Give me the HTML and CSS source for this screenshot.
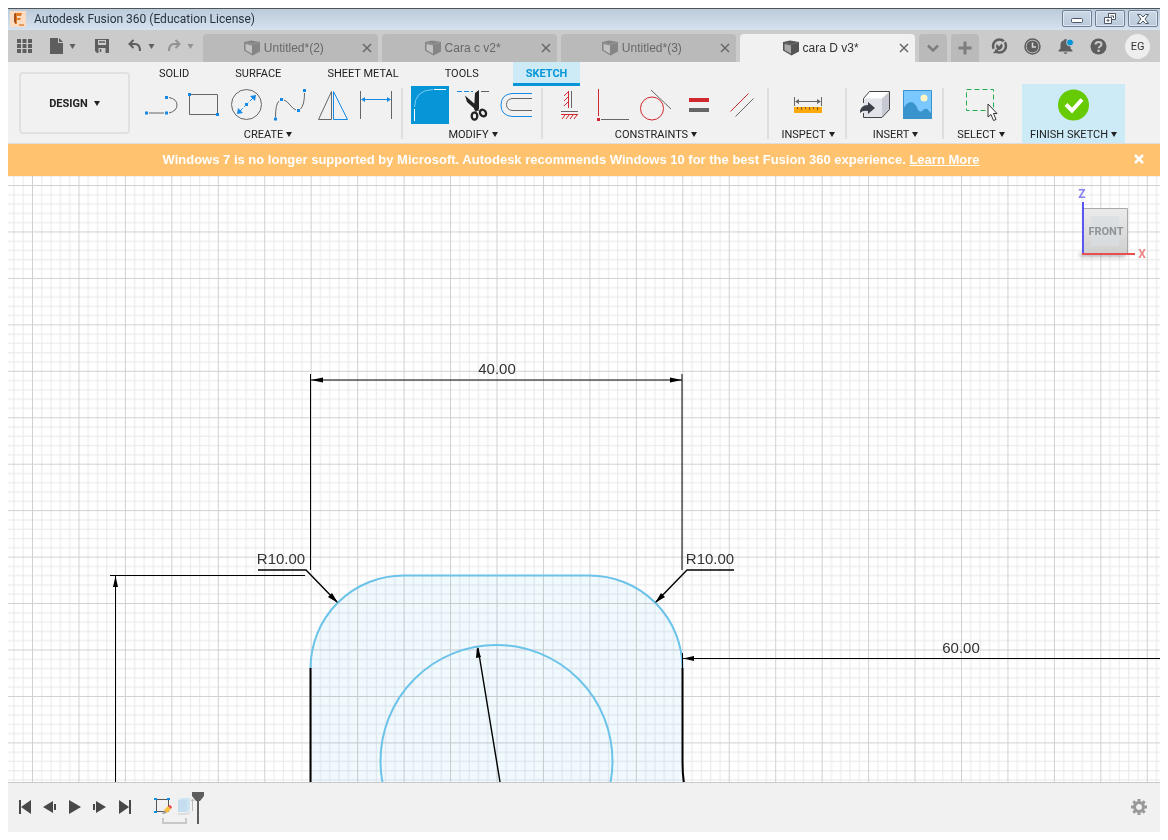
FILE: index.html
```html
<!DOCTYPE html>
<html lang="en">
<head>
<meta charset="utf-8">
<title>Autodesk Fusion 360 (Education License)</title>
<link rel="stylesheet" href="styles.css">
</head>
<body>
<svg class="defs" aria-hidden="true">
  <symbol id="cube" viewBox="0 0 16 16">
    <path d="M0 2 7 .5 16 2v9.500L8.500 15.500 0 10.500z" fill="currentColor"/>
    <path d="M1.500 4 8 5.500v8.300L1.500 10z" fill="#fff" fill-opacity=".5"/>
    <path d="M1.500 2.500 8 4.500 15 2.500" fill="none" stroke="#fff" stroke-opacity=".15"/>
  </symbol>
  <symbol id="close" viewBox="0 0 10 10"><path d="m1 1 8 8M9 1 1 9" stroke="currentColor" stroke-width="1.500" fill="none"/></symbol>
  <symbol id="caret" viewBox="0 0 6 5"><path d="M0 0h6L3 5z" fill="currentColor"/></symbol>
</svg>
<div class="app">
  <header class="titlebar">
    <svg class="logo" width="16" height="16" viewBox="0 0 16 16"><rect width="16" height="16" fill="#fbdcc0"/><path d="M5 2h7l-1 3H7v2h4l-1 2H7v4H5z" fill="#e07b28"/><path d="M5 2 4 3v8l2 2V2z" fill="#a8501a"/><path d="M9 14h5" stroke="#e59a60" stroke-width="2"/></svg>
    <h1 class="title">Autodesk Fusion 360 (Education License)</h1>
    <div class="window-buttons">
      <button class="win" aria-label="Minimize"><svg width="12" height="12" viewBox="0 0 12 12"><rect x=".5" y="5.500" width="11" height="4" rx="1" fill="#fff" stroke="#4c5666"/></svg></button>
      <button class="win" aria-label="Restore"><svg width="12" height="12" viewBox="0 0 12 12" fill="#fff" stroke="#4c5666"><path d="M4.500.5h7v6h-7z"/><path d="M6.500 3h3v2" /><path d="M.5 4.500h7v6h-7z"/><path d="M3 7h2v1H3z"/></svg></button>
      <button class="win" aria-label="Close"><svg width="12" height="12" viewBox="0 0 12 12"><path d="M.5 1.500h3L6 4l2.500-2.500h3L8 6l3.500 4.500h-3L6 8l-2.500 2.500h-3L4 6z" fill="#fff" stroke="#4c5666"/></svg></button>
    </div>
  </header>

  <div class="appbar">
    <div class="quick">
      <button aria-label="Data panel"><svg width="15" height="15" viewBox="0 0 15 15" fill="#5e5e5e"><path d="M0 0h4v4H0zM5.500 0h4v4h-4zM11 0h4v4h-4zM0 5h4v4H0zM5.500 5h4v4h-4zM11 5h4v4h-4zM0 10h4v4H0zM5.500 10h4v4h-4zM11 10h4v4h-4z"/></svg></button>
      <button class="file" aria-label="File"><svg width="14" height="16" viewBox="0 0 14 16" fill="#5e5e5e"><path d="M0 0h8v5h5v11H0z"/><path d="M9 0l4 4H9z"/></svg><svg class="drop" width="7" height="5"><use href="#caret"/></svg></button>
      <button class="save" aria-label="Save"><svg width="14" height="14" viewBox="0 0 14 14"><path d="M0 0h14v14H2l-2-2z" fill="#5e5e5e"/><path d="M3 1h8v5H3zM3.500 9h7v5h-7z" fill="#cbcbcb"/><path d="M4 3h6M5.500 10v3" stroke="#5e5e5e" stroke-width="1.500"/></svg></button>
      <button class="undo" aria-label="Undo"><svg width="14" height="14" viewBox="0 0 14 14" fill="none" stroke="#5e5e5e" stroke-width="2"><path d="M5.500 1 1.500 5l4 4M2 5h5q5 0 5 7"/></svg><svg class="drop" width="7" height="5"><use href="#caret"/></svg></button>
      <button class="redo" aria-label="Redo"><svg width="14" height="14" viewBox="0 0 14 14" fill="none" stroke="currentColor" stroke-width="2"><path d="m8.500 1 4 4-4 4M12 5H7q-5 0-5 7"/></svg><svg class="drop" width="7" height="5"><use href="#caret"/></svg></button>
    </div>
    <nav class="docs">
      <div class="doc"><svg width="16" height="16"><use href="#cube"/></svg><span>Untitled*(2)</span><button aria-label="Close Untitled*(2)"><svg width="10" height="10"><use href="#close"/></svg></button></div>
      <div class="doc"><svg width="16" height="16"><use href="#cube"/></svg><span>Cara c v2*</span><button aria-label="Close Cara c v2*"><svg width="10" height="10"><use href="#close"/></svg></button></div>
      <div class="doc"><svg width="16" height="16"><use href="#cube"/></svg><span>Untitled*(3)</span><button aria-label="Close Untitled*(3)"><svg width="10" height="10"><use href="#close"/></svg></button></div>
      <div class="doc current"><svg width="16" height="16"><use href="#cube"/></svg><span>cara D v3*</span><button aria-label="Close cara D v3*"><svg width="10" height="10"><use href="#close"/></svg></button></div>
      <button class="mini" aria-label="More tabs"><svg width="12" height="8" viewBox="0 0 12 8"><path d="m1 1.500 5 5 5-5" fill="none" stroke="#7e7e7e" stroke-width="2.500"/></svg></button>
      <button class="mini" aria-label="New design"><svg width="14" height="14" viewBox="0 0 14 14"><path d="M7 .5v13M.5 7h13" stroke="#7e7e7e" stroke-width="3"/></svg></button>
    </nav>
    <div class="status">
      <button aria-label="Extensions"><svg width="17" height="17" viewBox="0 0 17 17"><circle cx="8.500" cy="8" r="6.500" fill="none" stroke="#5e5e5e" stroke-width="2.500"/><path d="M10 7l5-5" stroke="#cbcbcb" stroke-width="1.500"/><path d="M0 12l4-2v6H1z" fill="#cbcbcb"/><path d="M2 15l4-4q-2-3 0-5l2 2.500 2.500-3q2 2 .5 4.500t-3.500 2L4 15.500z" fill="#5e5e5e"/></svg></button>
      <button aria-label="Job status"><svg width="17" height="17" viewBox="0 0 17 17"><circle cx="8.500" cy="8.500" r="7.500" fill="none" stroke="#5e5e5e" stroke-width="1.500"/><circle cx="8.500" cy="8.500" r="6" fill="#5e5e5e"/><path d="M8.500 4.500v4.500H12" fill="none" stroke="#d8d8d8" stroke-width="1.500"/></svg></button>
      <button aria-label="Notifications"><svg width="17" height="17" viewBox="0 0 17 17"><path d="M1.500 13.500v-1l2-2V7q0-4 4-5V1h2v1q4 1 4 5v3.500l2 2v1z" fill="#5e5e5e"/><path d="M6.500 14.500h4q-2 3-4 0z" fill="#5e5e5e"/><circle cx="13" cy="4.500" r="3.500" fill="#0696d7" stroke="#cbcbcb"/></svg></button>
      <button aria-label="Help"><svg width="17" height="17" viewBox="0 0 17 17"><circle cx="8.500" cy="8.500" r="8" fill="#5e5e5e"/><path d="M5.500 6.500q0-2.500 3-2.500t3 2.300q0 1.200-1.500 2.200-1.300.8-1.300 1.700" fill="none" stroke="#cbcbcb" stroke-width="2"/><circle cx="8.600" cy="12.800" r="1.300" fill="#cbcbcb"/></svg></button>
      <button class="avatar">EG</button>
    </div>
  </div>

  <div class="ribbon">
    <button class="workspace">DESIGN <svg width="6" height="5"><use href="#caret"/></svg></button>
    <div class="ribbon-main">
      <nav class="ribbon-tabs">
        <button>SOLID</button><button>SURFACE</button><button>SHEET METAL</button><button>TOOLS</button><button class="selected">SKETCH</button>
      </nav>
      <div class="groups">
        <section class="group create">
          <div class="tools">
            <button aria-label="Line"><svg class="tool" viewBox="0 0 38 38"><path d="M7 27h15M27 11.500q8 1.500 8 7.500t-8 8" class="g"/><path d="M3 25.500h3v3H3zM23 25.500h3v3h-3zM23 10h3v3h-3z" class="b"/></svg></button>
            <button aria-label="Rectangle"><svg class="tool" viewBox="0 0 38 38"><path d="M4.500 8.500h28v20h-28z" class="g"/><path d="M3 7h3v3H3zM31 27h3v3h-3z" class="b"/></svg></button>
            <button aria-label="Circle"><svg class="tool" viewBox="0 0 38 38"><circle cx="18.500" cy="18.500" r="15" class="g"/><path d="m10.500 26.500 16-16" class="bl" stroke-dasharray="6 2"/><path d="M17 17h3v3h-3zM9 28l1-6 5 5zM28 9l-1 6-5-5z" class="b"/></svg></button>
            <button aria-label="Spline"><svg class="tool" viewBox="0 0 38 38"><path d="M4.500 31Q4.500 18 8 15M13 14q3 1 6 5t6 5M29.500 23q4-4 4-16" class="g"/><path d="M3 31.500h3v3H3zM9 12h3v3H9zM26 23h3v3h-3zM32 3h3v3h-3z" class="b"/></svg></button>
            <button aria-label="Mirror"><svg class="tool" viewBox="0 0 38 38"><path d="M17.500 5.500v28h-13z" class="g"/><path d="M19.500 5.500v28h14z" class="bl"/></svg></button>
            <button aria-label="Sketch dimension"><svg class="tool" viewBox="0 0 38 38"><path d="M3.500 5v28M34.500 5v28" class="g"/><path d="M7 13.500h24" class="bl"/><path d="M4 13.500l4-2.500v5zM34 13.500l-4-2.500v5z" class="b"/></svg></button>
          </div>
          <button class="label">CREATE <svg width="6" height="5"><use href="#caret"/></svg></button>
        </section>
        <section class="group modify">
          <div class="tools">
            <button aria-label="Fillet" class="active"><svg class="tool" viewBox="0 0 38 38"><path d="M3.500 21Q4 4 22 3.500" fill="none" stroke="#7cc8f2"/><path d="M3.500 23v12M23 3.500h12" stroke="#fff"/></svg></button>
            <button aria-label="Trim"><svg class="tool" viewBox="0 0 38 38"><path d="M3 5.500h16" class="bl" stroke-dasharray="5 2"/><path d="M27 5.500h8" class="g"/><path d="M11 9.500 23 20l2 5-3-1-9-8zM21 7l4-3v19l-3 3-2-3z" fill="#222"/><g fill="none" stroke="#222" stroke-width="2.300"><ellipse cx="20.500" cy="30" rx="2.800" ry="3.700"/><ellipse cx="29" cy="27" rx="2.800" ry="3.500" transform="rotate(-38 29 27)"/></g></svg></button>
            <button aria-label="Offset"><svg class="tool" viewBox="0 0 38 38"><path d="M35 7.500H15q-11 1-11 11.500t11 11.500h20" class="bl"/><path d="M35 12.500H15q-5.500 1-5.500 6t5.500 6h20" class="g"/></svg></button>
          </div>
          <button class="label">MODIFY <svg width="6" height="5"><use href="#caret"/></svg></button>
        </section>
        <section class="group constraints">
          <div class="tools">
            <button aria-label="Horizontal/Vertical"><svg class="tool" viewBox="0 0 38 38"><path d="M20.500 5v17M10 25.500h17" class="g"/><path d="M17.500 5v17M10 28.500h17M17 6l-4 4M17 11l-4 4M17 16l-4 4M14 29l-3 4M18 29l-3 4M22 29l-3 4M26 29l-3 4" class="r"/></svg></button>
            <button aria-label="Perpendicular"><svg class="tool" viewBox="0 0 38 38"><path d="M4.500 3v27" class="r"/><path d="M3 32h3v3H3z" fill="#d0282e"/><path d="M7 33.500h28" class="g"/></svg></button>
            <button aria-label="Tangent"><svg class="tool" viewBox="0 0 38 38"><circle cx="15" cy="22.500" r="11.500" class="r"/><path d="M14 4l20 19" class="g"/></svg></button>
            <button aria-label="Equal"><svg class="tool" viewBox="0 0 38 38"><path d="M9 12h20v4H9z" fill="#d0282e"/><path d="M9 22h20v4H9z" fill="#666"/></svg></button>
            <button aria-label="Parallel"><svg class="tool" viewBox="0 0 38 38"><path d="m7.500 25.500 18-18" class="r"/><path d="m12.500 30.500 18-18" class="g"/></svg></button>
          </div>
          <button class="label">CONSTRAINTS <svg width="6" height="5"><use href="#caret"/></svg></button>
        </section>
        <section class="group inspect">
          <div class="tools">
            <button aria-label="Measure"><svg class="tool" viewBox="0 0 38 38"><path d="M5.500 11v9M32.500 11v9M7 15.500h24" class="g"/><path d="m6 15.500 4-2.500v5zM32 15.500l-4-2.500v5z" fill="#666"/><path d="M5 21h28v6H5z" fill="#fba90a"/><path d="M8.500 21v2M12.500 21v3M16.500 21v2M20.500 21v3M24.500 21v2M28.500 21v3" stroke="#80601c"/></svg></button>
          </div>
          <button class="label">INSPECT <svg width="6" height="5"><use href="#caret"/></svg></button>
        </section>
        <section class="group insert">
          <div class="tools">
            <button aria-label="Insert derive"><svg class="tool" viewBox="0 0 38 38"><path d="M8.500 12.500 14 5.500h20.500L27 12.500z" fill="#fff"/><path d="M27 12.500 34.500 5.500v18l-7.500 8z" fill="#c6c9d1"/><path d="M8.500 12.500H27v19H8.500z" fill="#e3e4ea"/><path d="M8.500 17v-4.500l6-7h20v18l-7.500 8H8.500V27" fill="none" stroke="#444"/><path d="M5 27q0-8 8-8v-3l7 6-7 6v-3q-5-1-8 2z" fill="#3c4048"/></svg></button>
            <button aria-label="Insert image"><svg class="tool" viewBox="0 0 38 38"><path d="M5 4h29v29H5z" fill="#7bc8ff"/><circle cx="26" cy="12" r="3.500" fill="#fff5c4"/><path d="M5 23q4-7 8-7t7 8q3 3 5 0 4-3 6 1l3 3v5H5z" fill="#3993cc"/><path d="M5.500 4.500h28v28h-28z" fill="none" stroke="#3993cc"/></svg></button>
          </div>
          <button class="label">INSERT <svg width="6" height="5"><use href="#caret"/></svg></button>
        </section>
        <section class="group select">
          <div class="tools">
            <button aria-label="Select"><svg class="tool" viewBox="0 0 38 38"><path d="M4.500 3.500h27v21h-27z" fill="none" stroke="#22ae4c" stroke-dasharray="5 3"/><path d="M26 18v13l3-2.500 2.500 6 2.500-1-2.500-6H35z" fill="#fff" stroke="#333"/></svg></button>
          </div>
          <button class="label">SELECT <svg width="6" height="5"><use href="#caret"/></svg></button>
        </section>
        <section class="group finish">
          <div class="tools">
            <button aria-label="Finish sketch"><svg class="tool" viewBox="0 0 38 38"><circle cx="18.500" cy="19" r="15.500" fill="#66cb05"/><path d="m11 18.500 6 6 10-11" fill="none" stroke="#fff" stroke-width="4"/></svg></button>
          </div>
          <button class="label">FINISH SKETCH <svg width="6" height="5"><use href="#caret"/></svg></button>
        </section>
      </div>
    </div>
  </div>

  <div class="banner" role="alert">
    <p>Windows 7 is no longer supported by Microsoft. Autodesk recommends Windows 10 for the best Fusion 360 experience. <a href="#">Learn More</a></p>
    <button aria-label="Dismiss"><svg width="10" height="10" viewBox="0 0 10 10"><path d="m1 1 8 8M9 1 1 9" stroke="#fff" stroke-width="2.500"/></svg></button>
  </div>

  <main class="canvas">
    <svg class="sketch" width="100%" height="100%">
      <defs>
        <pattern id="grid" x="24" y="9" width="46.450" height="46.450" patternUnits="userSpaceOnUse">
          <path d="M9.790 0v46.450M19.080 0v46.450M28.370 0v46.450M37.660 0v46.450M0 9.790h46.450M0 19.080h46.450M0 28.370h46.450M0 37.660h46.450" stroke="#e8e8e8"/>
          <path d="M.5 0v46.450M0 .5h46.450" stroke="#d0d0d0"/>
        </pattern>
      </defs>
      <g transform="translate(-8 -176)">
        <path d="M310.500 790V668A93 93 0 0 1 403.500 575.500H589.500A93 93 0 0 1 682.500 668V790z" fill="#f0f9fe"/>
      </g>
      <rect class="grid" width="100%" height="100%" fill="url(#grid)"/>
      <g transform="translate(-8 -176)">
        <g fill="none" stroke="#6cc3ea" stroke-width="2">
          <path d="M310.500 668A93 93 0 0 1 403.500 575.500H589.500A93 93 0 0 1 682.500 668"/>
          <circle cx="496.500" cy="761" r="116"/>
        </g>
        <g fill="none" stroke="#000">
          <path d="M310.500 374v196M682 374v196M311 380h371M110 575.500h195M115.500 576v220M682.500 653v15M683 658.500h2000"/>
          <path d="M310.500 668v130M682.500 668v94q0 14 2 24" stroke-width="2"/>
          <path d="M258 570h48l31 32M734 570h-47l-31 32M478 648l23 140" stroke-width="1.400"/>
        </g>
        <path d="m311 380 12-2.500v5zM682 380l-12-2.500v5zM115.500 576l-2.500 11h5zM683 658.500l11-2.500v5zM338 603l-10-6 4-4zM655 603l10-6-4-4zM477 647l-1 11 5-1z"/>
        <g class="dims">
          <text x="497" y="374">40.00</text>
          <text x="281" y="564">R10.00</text>
          <text x="710" y="564">R10.00</text>
          <text x="961" y="653">60.00</text>
        </g>
      </g>
    </svg>
    <div class="viewcube">
      <svg width="80" height="80" viewBox="0 0 80 80">
        <defs><linearGradient id="face" x2="0" y2="1"><stop stop-color="#ebebeb"/><stop offset="1" stop-color="#d0d0d0"/></linearGradient><filter id="soft" x="-20%" y="-300%" width="140%" height="700%"><feGaussianBlur stdDeviation="2"/></filter></defs>
        <path d="M12 69h46v2H12z" fill="#666" filter="url(#soft)"/>
        <path d="M14.500 23.500h45v45h-45z" fill="url(#face)" stroke="#a9a9a9"/>
        <path d="M23 31h28v30H23z" fill="#dadee2" opacity=".7"/>
        <path d="M15 69V17" stroke="#5b57f2" stroke-width="2"/><path d="M14 69h53" stroke="#e94f51" stroke-width="2"/>
        <text x="14" y="13" class="axis-z">Z</text><text x="74" y="73" class="axis-x">X</text>
        <text x="38" y="50" class="face">FRONT</text>
      </svg>
    </div>
  </main>

  <footer class="timeline">
    <div class="playback">
      <button aria-label="Go to start"><svg width="14" height="14" viewBox="0 0 14 14"><path d="M1 0h2v14H1zM13 0v14L3 7z"/></svg></button>
      <button aria-label="Step back"><svg width="14" height="14" viewBox="0 0 14 14"><path d="M10 1v12L0 7zM11 4h2v6h-2z"/></svg></button>
      <button aria-label="Play"><svg width="14" height="14" viewBox="0 0 14 14"><path d="M1 0v14l12-7z"/></svg></button>
      <button aria-label="Step forward"><svg width="14" height="14" viewBox="0 0 14 14"><path d="M3 1v12l10-6zM0 4h2v6H0z"/></svg></button>
      <button aria-label="Go to end"><svg width="14" height="14" viewBox="0 0 14 14"><path d="M11 0h2v14h-2zM1 0v14l10-7z"/></svg></button>
    </div>
    <div class="features">
      <svg width="52" height="34" viewBox="0 0 52 34">
        <path d="M2.500 8.500h12v12h-12z" fill="none" stroke="#555"/><path d="M0 7h3v2H0zM13 7h3v2h-3zM0 20h3v2H0z" fill="#0d8fe8"/>
        <path d="m8 23 2-4 3 3z" fill="#999"/><path d="m10 19 4-4 3 3-4 4z" fill="#fcc140"/><path d="m14 15 2-1 2 2-1 2z" fill="#ef4048"/>
        <path d="M24 9l3-2h9v12l-3 2h-9z" fill="#cfe4f3"/><path d="M24 9h9v12h-9z" fill="#bddaed" opacity=".6"/><path d="M24 23h9l3-2" fill="none" stroke="#ddd" stroke-width="2"/><path d="M38.500 20V8m-1.500 2 1.500-2L40 10" fill="none" stroke="#bbb"/>
        <path d="M9 27v5h23v-5" fill="none" stroke="#c8c8c8" stroke-width="2"/>
        <path d="M38 1h12v4l-4 5h-1v23h-2V10h-1l-4-5z" fill="#5e5e5e"/>
      </svg>
    </div>
    <button class="settings" aria-label="Timeline settings"><svg width="16" height="16" viewBox="0 0 16 16"><g stroke="#999" fill="none"><circle cx="8" cy="8" r="4.500" stroke-width="3"/><path d="M8 0v3M8 13v3M0 8h3M13 8h3M2.300 2.300l2 2M11.700 11.700l2 2M2.300 13.700l2-2M11.700 4.300l2-2" stroke-width="3"/></g></svg></button>
  </footer>
</div>
</body>
</html>
```
FILE: styles.css
```css
* { box-sizing: border-box; }
body { margin: 0; background: #fff; font-family: Roboto, "Liberation Sans", sans-serif; font-size: 11px; color: #222; }
button { border: 0; padding: 0; background: none; font: inherit; color: inherit; display: flex; align-items: center; justify-content: center; cursor: pointer; }
svg { display: block; flex: none; }
h1, p { margin: 0; }
.defs { position: absolute; width: 0; height: 0; }
.app { display: flex; flex-direction: column; height: 100vh; padding: 8px; overflow: hidden; }

.titlebar { display: flex; align-items: center; height: 22px; flex: none; padding: 0 2px 2px; border-top: 1px solid #4e545c; background: linear-gradient(#bccbda, #d5e2ef); }
.title { margin-left: 8px; font: 400 12px Roboto, "Noto Sans", sans-serif; color: #28323e; flex: 1; }
.window-buttons { display: flex; gap: 3px; }
.win { width: 30px; height: 17px; border: 1px solid #6e7f95; border-radius: 2px; background: linear-gradient(#ccd8e5, #bacadc); box-shadow: inset 0 0 0 1px #dfe8f2; }

.appbar { display: flex; height: 32px; flex: none; background: #cbcbcb; color: #5e5e5e; }
.quick { display: flex; width: 195px; padding-left: 9px; align-items: center; }
.file { margin-left: 18px; gap: 5px; }
.save { margin-left: 19px; }
.undo { margin-left: 19px; gap: 6px; }
.redo { margin-left: 12px; gap: 6px; color: #929292; }
.docs { display: flex; flex: 1; gap: 4px; padding-top: 4px; font: 12px "Liberation Sans", Arial, sans-serif; }
.doc { display: grid; grid-template-columns: 5fr auto auto 6fr; align-items: center; column-gap: 4px; flex: 0 1 175px; padding: 0 6px 0 0; border-radius: 4px 4px 0 0; background: #bababa; color: #858585; white-space: nowrap; }
.doc > svg { grid-column: 2; }
.doc span { color: #686868; }
.doc button { justify-self: end; color: #686868; }
.doc.current { background: #f1f1f1; color: #555; }
.doc.current span { color: #333; }
.mini { width: 28px; border-radius: 4px 4px 0 0; background: #bababa; }
.status { display: flex; align-items: center; gap: 16px; padding-right: 10px; }
.avatar { width: 25px; height: 25px; margin-left: 2px; border-radius: 50%; background: #eee; color: #333; }

.ribbon { display: flex; flex: none; height: 82px; background: #f1f1f1; border-bottom: 1px solid #ddd; }
.workspace { width: 111px; height: 62px; margin: 10px 3px 0 11px; gap: 6px; border: 2px solid #e0e0e0; border-radius: 4px; font-weight: 700; }
.ribbon-tabs { display: flex; gap: 22px; padding-left: 14px; height: 24px; }
.ribbon-tabs button { padding: 0 12px 2px; }
.ribbon-tabs .selected { padding: 1px 13px 0; border-bottom: 3px solid #0696d7; background: #cdeaf7; color: #0696d7; font-weight: 700; }
.groups { display: flex; }
.group { position: relative; width: 78px; height: 57px; }
.group::after { content: ""; position: absolute; right: 0; top: 2px; width: 2px; height: 51px; background: #dedede; }
.tools { display: flex; justify-content: center; gap: 5px; }
.tool { width: 38px; height: 38px; fill: none; }
.label { width: 100%; height: 19px; padding-top: 1px; gap: 3px; white-space: nowrap; }
.create { width: 270px; }
.modify { width: 140px; }
.constraints { width: 226px; }
.insert { width: 97px; }
.select { width: 74px; }
.select::after, .finish::after { display: none; }
.finish { width: 103px; height: 59px; margin: -2px 0 0 4px; padding-top: 2px; background: #cdeaf7; }
.active { background: #0696d7; }
.g { fill: none; stroke: #666; }
.bl { fill: none; stroke: #1589e6; }
.b { fill: #1589e6; }
.r { fill: none; stroke: #d0282e; }

.banner { display: flex; align-items: center; flex: none; height: 32px; padding: 0 16px 2px 0; background: #ffc26e; color: #fff; font: 700 13px "Liberation Sans", Arial, sans-serif; }
.banner p { flex: 1; text-align: center; }
.banner a { color: inherit; }

.canvas { position: relative; flex: 1; min-height: 0; overflow: hidden; background: #fff; }
.sketch { width: 100%; height: 100%; }
.grid { mix-blend-mode: multiply; }
.dims { font: 15px "Liberation Sans", Arial, sans-serif; fill: #333; text-anchor: middle; }
.viewcube { position: absolute; top: 9px; right: 12px; font: 700 12px Roboto, "Noto Sans", sans-serif; text-anchor: middle; }
.face { font-size: 11px; fill: #8e9398; }
.axis-z { fill: #8884ee; }
.axis-x { fill: #ef8587; }

.timeline { display: flex; align-items: center; flex: none; height: 50px; padding: 0 13px 2px 10px; border-top: 1px solid #c8c8c8; background: #f1f1f1; }
.playback { display: flex; gap: 11px; fill: #484848; }
.features { margin-left: 22px; padding-top: 2px; flex: 1; }
```
